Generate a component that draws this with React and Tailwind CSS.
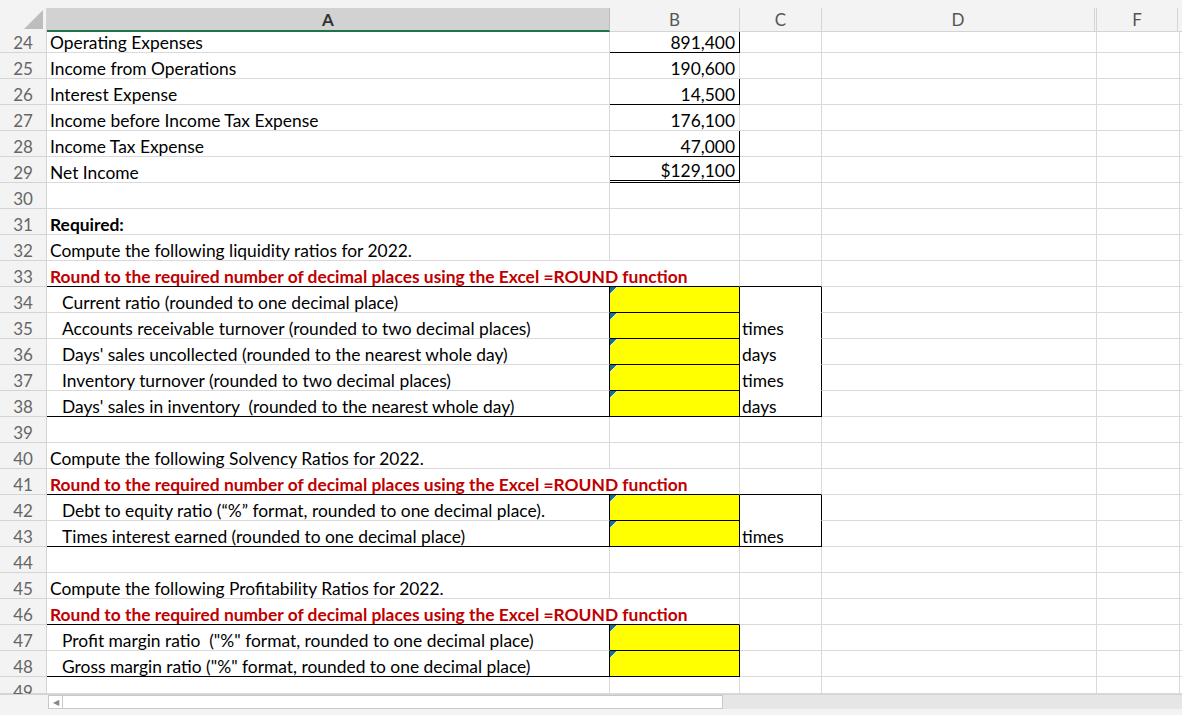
import React from 'react';

const GRID = 'border-[#dadada]';

// column widths incl. right gridline
const W = { hdr: 'w-[47px]', A: 'w-[563px]', AB: 'w-[693px]', B: 'w-[130px]', C: 'w-[82px]', D: 'w-[275px]', F: 'w-[83px]' };

const Flag = () => (
  <svg className="absolute left-0 top-0" width="8" height="8" viewBox="0 0 8 8">
    <polygon points="0,0 7,0 0,7" fill="#16738a" />
    <line x1="7" y1="0" x2="0" y2="7" stroke="#ffffff" strokeWidth="1" opacity="0.8" />
  </svg>
);

const rows = [
  { n: 24, a: 'Operating Expenses', b: '891,400', bb: 'line', h: 'h-[21px]' },
  { n: 25, a: 'Income from Operations', b: '190,600' },
  { n: 26, a: 'Interest Expense', b: '14,500', bb: 'line' },
  { n: 27, a: 'Income before Income Tax Expense', b: '176,100' },
  { n: 28, a: 'Income Tax Expense', b: '47,000', bb: 'line' },
  { n: 29, a: 'Net Income', b: '$129,100', bb: 'double' },
  { n: 30 },
  { n: 31, a: 'Required:', bold: true },
  { n: 32, a: 'Compute the following liquidity ratios for 2022.' },
  { n: 33, a: 'Round to the required number of decimal places using the Excel =ROUND function', red: true, boxTop: 'C' },
  { n: 34, a: 'Current ratio (rounded to one decimal place)', ind: true, box: 'C', y: true },
  { n: 35, a: 'Accounts receivable turnover (rounded to two decimal places)', ind: true, box: 'C', y: true, c: 'times' },
  { n: 36, a: "Days' sales uncollected (rounded to the nearest whole day)", ind: true, box: 'C', y: true, c: 'days' },
  { n: 37, a: 'Inventory turnover (rounded to two decimal places)', ind: true, box: 'C', y: true, c: 'times' },
  { n: 38, a: "Days' sales in inventory  (rounded to the nearest whole day)", ind: true, box: 'C', y: true, c: 'days', last: true },
  { n: 39 },
  { n: 40, a: 'Compute the following Solvency Ratios for 2022.' },
  { n: 41, a: 'Round to the required number of decimal places using the Excel =ROUND function', red: true, boxTop: 'C' },
  { n: 42, a: 'Debt to equity ratio (“%” format, rounded to one decimal place).', ind: true, box: 'C', y: true },
  { n: 43, a: 'Times interest earned (rounded to one decimal place)', ind: true, box: 'C', y: true, c: 'times', last: true },
  { n: 44 },
  { n: 45, a: 'Compute the following Profitability Ratios for 2022.' },
  { n: 46, a: 'Round to the required number of decimal places using the Excel =ROUND function', red: true, boxTop: 'B' },
  { n: 47, a: 'Profit margin ratio  ("%" format, rounded to one decimal place)', ind: true, box: 'B', y: true },
  { n: 48, a: 'Gross margin ratio ("%" format, rounded to one decimal place)', ind: true, box: 'B', y: true, last: true },
  { n: 49, h: 'h-[17px]', cut: true },
];

const Row = ({ r }) => {
  const h = r.h || 'h-[26px]';
  const txt = r.red ? 'text-[#c00000] font-bold' : r.bold ? 'font-bold text-black' : 'text-black';
  const overflow = r.red;
  const boxBottom = r.last ? 'border-b-black' : '';
  const topC = r.boxTop === 'C';
  const topB = r.boxTop === 'B';
  const inBoxC = r.box === 'C';
  const inBox = !!r.box;

  let bBorder = `border-b ${GRID}`;
  if (r.bb === 'line') bBorder = 'border-b border-b-black';
  if (r.bb === 'double') bBorder = 'border-b-[3px] border-double border-b-black';

  return (
    <div className={`flex ${h} overflow-hidden`}>
      <div className={`${W.hdr} shrink-0 bg-[#f3f3f3] border-r border-b border-[#d4d4d4] flex ${r.cut ? 'items-start pt-[6px]' : 'items-end pb-[1px]'} justify-center text-[#666] text-[17px]`}>
        {r.n}
      </div>
      {overflow ? (
        <div className={`${W.AB} shrink-0 border-r border-b ${GRID} ${topC || topB ? 'border-b-black' : ''} flex items-end pb-[1px] pl-[3px] whitespace-pre ${txt}`}>
          {r.a}
        </div>
      ) : (
        <>
          <div className={`${W.A} shrink-0 border-r border-b ${GRID} ${inBox ? 'border-r-black' : ''} ${boxBottom} flex items-end pb-[1px] ${r.ind ? 'pl-[15px]' : 'pl-[3px]'} whitespace-pre ${txt}`}>
            {r.a}
          </div>
          <div className={`${W.B} shrink-0 relative border-r ${bBorder} ${inBox ? 'border-r-black border-b-black bg-[#ffff00]' : ''} flex items-end justify-end pb-[1px] pr-[4px] text-black`}>
            {r.y && <Flag />}
            {r.b}
          </div>
        </>
      )}
      <div className={`${W.C} shrink-0 border-r ${inBoxC ? 'border-r-black' : GRID} ${inBoxC ? (r.last ? 'border-b border-b-black' : 'border-b border-b-white') : `border-b ${GRID}`} ${topC ? 'border-b-black' : ''} flex items-end pb-[1px] pl-[2px] text-black`}>
        {r.c}
      </div>
      <div className={`${W.D} shrink-0 border-r border-b ${GRID}`} />
      <div className={`${W.F} shrink-0 border-r border-b ${GRID}`} />
      <div className={`flex-1 border-b ${GRID}`} />
    </div>
  );
};

export default function App() {
  return (
    <div className="w-[1182px] h-[715px] overflow-hidden bg-white flex flex-col text-[17.4px] leading-none" style={{ fontFamily: 'Lato, "Open Sans", sans-serif' }}>
      <div className="h-[8px] bg-[#f3f3f3] shrink-0" />
      {/* column headers */}
      <div className="flex h-[24px] shrink-0 bg-[#f3f3f3] text-[#555] text-[17px]">
        <div className={`${W.hdr} shrink-0 relative border-r border-[#d4d4d4]`}>
          <svg className="absolute right-[3px] bottom-[3px]" width="19" height="19" viewBox="0 0 19 19">
            <polygon points="19,0 19,19 0,19" fill="#bdbdbd" />
          </svg>
        </div>
        <div className={`${W.A} shrink-0 bg-[#d2d2d2] border-b-2 border-b-[#217346] border-r border-r-[#bdbdbd] flex items-center justify-center font-bold text-[#333]`}>
          A
        </div>
        <div className={`${W.B} shrink-0 border-r border-b border-[#d4d4d4] flex items-center justify-center`}>B</div>
        <div className={`${W.C} shrink-0 border-r border-b border-[#d4d4d4] flex items-center justify-center`}>C</div>
        <div className={`${W.D} shrink-0 border-r-[3px] border-double border-b border-[#d4d4d4] flex items-center justify-center`}>D</div>
        <div className={`w-[81px] shrink-0 border-r border-b border-[#d4d4d4] flex items-center justify-center`}>F</div>
        <div className="flex-1 border-b border-[#d4d4d4]" />
      </div>
      {rows.map((r) => (
        <Row key={r.n} r={r} />
      ))}
      {/* horizontal scrollbar */}
      <div className="flex h-[15px] shrink-0 bg-[#f3f3f3] border-t border-[#d4d4d4]">
        <div className="w-[48px] shrink-0" />
        <div className="w-[15px] shrink-0 bg-white border border-[#c8c8c8] flex items-center justify-center text-[#888] text-[8px]">◀</div>
        <div className="w-[660px] shrink-0 bg-white border border-l-0 border-[#c8c8c8]" />
        <div className="flex-1 bg-[#e6e6e6]" />
      </div>
      <div className="flex-1 bg-[#f3f3f3]" />
    </div>
  );
}
